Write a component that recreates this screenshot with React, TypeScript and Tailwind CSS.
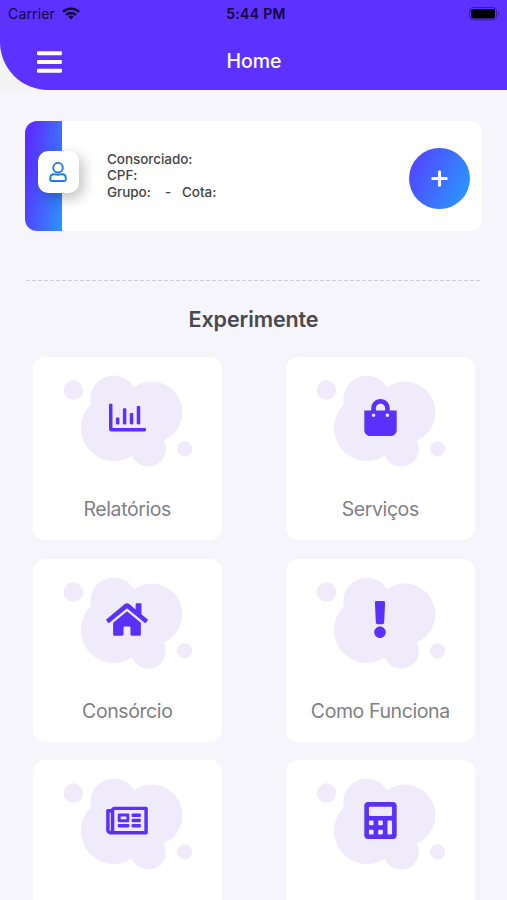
import React from 'react'
import type {IconType} from 'react-icons'
import {
    FaBars,
    FaCalculator,
    FaExclamation,
    FaHome,
    FaRegChartBar,
    FaRegNewspaper,
    FaShoppingBag,
} from 'react-icons/fa'

interface MenuItem {
    label?: string
    icon: IconType
    iconClass: string
}

const menuItems: MenuItem[] = [
    {label: 'Relatórios', icon: FaRegChartBar, iconClass: 'w-[37px] h-[37px]'},
    {label: 'Serviços', icon: FaShoppingBag, iconClass: 'w-[33px] h-[37px]'},
    {label: 'Consórcio', icon: FaHome, iconClass: 'w-[42px] h-[37px]'},
    {label: 'Como Funciona', icon: FaExclamation, iconClass: 'w-[14px] h-[37px]'},
    {icon: FaRegNewspaper, iconClass: 'w-[42px] h-[37px]'},
    {icon: FaCalculator, iconClass: 'w-[33px] h-[37px]'},
]

function StatusBar() {
    return (
        <div className="grid grid-cols-3 items-center h-7 pl-2 pr-[7px] text-[#12063d]">
            <div className="flex items-center gap-[7px]">
                <span className="text-[14px] leading-none tracking-[0.15px]">Carrier</span>
                <svg className="-mt-px" width="18" height="13" viewBox="0 0 18 13" fill="none" stroke="#0c0330" strokeWidth="2.4">
                    <path d="M1 4.9a11.4 11.4 0 0 1 16 0"/>
                    <path d="M4 8a7.1 7.1 0 0 1 10 0"/>
                    <path d="M9 12.4 6.4 9.8a3.8 3.8 0 0 1 5.2 0z" fill="#0c0330" stroke="none"/>
                </svg>
            </div>
            <span className="text-center text-[14px] leading-none font-semibold tracking-[0.3px] pl-[4px]">5:44 PM</span>
            <svg className="justify-self-end -mt-px" width="31" height="14" viewBox="0 0 31 14">
                <rect x="0.5" y="0.5" width="27" height="12.5" rx="3.5" fill="none" stroke="#3b1ba8"/>
                <rect x="2" y="2" width="24" height="9.5" rx="2" fill="#000"/>
                <path d="M29 4.7c1.5.6 1.5 3.5 0 4.1z" fill="#3b1ba8"/>
            </svg>
        </div>
    )
}

function Header() {
    return (
        <header className="bg-[#f3f3f4]">
            <div className="h-[90px] bg-[#5d31ff] rounded-bl-[48px]">
                <StatusBar/>
                <div className="grid grid-cols-[1fr_auto_1fr] items-center h-[66px] pl-[37px]">
                    <button className="w-6 pt-[2px]">
                        <FaBars className="w-[25px] h-[28px] text-white" preserveAspectRatio="none"/>
                    </button>
                    <h1 className="pt-px text-[19.5px] leading-none font-medium text-white -ml-[36px]">Home</h1>
                </div>
            </div>
        </header>
    )
}

function ProfileCard() {
    return (
        <section className="flex items-center h-[110px] rounded-xl bg-white overflow-hidden">
            <div className="flex items-center w-[37px] h-full pl-[12.5px] bg-[linear-gradient(100deg,#5a30ff_15%,#2b95ff_100%)]">
                <div
                    className="flex items-center justify-center shrink-0 w-[41.5px] h-[42px] -mt-[7px] rounded-[10px] bg-white shadow-[4px_5px_14px_rgba(0,0,0,0.26)]">
                    <svg width="18" height="20" viewBox="0 0 18 20" fill="none" stroke="#2079f2" strokeWidth="1.9">
                        <circle cx="9" cy="5.7" r="4.8"/>
                        <path d="M5 12.2c1.2 0 2 .6 4 .6s2.8-.6 4-.6c2.4 0 3.8 1.7 3.8 4v1.3c0 .9-.6 1.5-1.5 1.5H2.7c-.9 0-1.5-.6-1.5-1.5v-1.3c0-2.3 1.4-4 3.8-4z"/>
                    </svg>
                </div>
            </div>
            <div className="flex-1 pl-[45px] text-[13.5px] leading-[16.2px] tracking-[-0.05px] font-medium text-[#454547]">
                <p>Consorciado:</p>
                <p>CPF:</p>
                <p className="flex">
                    <span className="w-[58px]">Grupo:</span>
                    <span className="w-[17px]">-</span>
                    <span>Cota:</span>
                </p>
            </div>
            <button
                className="flex items-center justify-center w-[61px] h-[61px] mr-[12px] mt-[6px] rounded-full bg-[linear-gradient(115deg,#5146ff_10%,#2b95ff_90%)]">
                <svg width="17" height="17" viewBox="0 0 17 17" stroke="#fff" strokeWidth="3" strokeLinecap="round">
                    <path d="M8.5 1.7v13.6M1.7 8.5h13.6"/>
                </svg>
            </button>
        </section>
    )
}

function Cloud() {
    return (
        <svg className="w-full h-full" viewBox="0 0 190 120" fill="#efebfb">
            <circle cx="40.5" cy="33" r="9.8"/>
            <circle cx="81" cy="42" r="23.5"/>
            <circle cx="119" cy="55.3" r="30.8"/>
            <circle cx="81" cy="71" r="33"/>
            <circle cx="115.5" cy="92" r="17.7"/>
            <circle cx="152" cy="92" r="7.6"/>
        </svg>
    )
}

function MenuCard({label, icon: Icon, iconClass}: MenuItem) {
    return (
        <button className="flex flex-col items-center h-[183px] rounded-xl bg-white">
            <div className="grid w-full h-[120px]">
                <div className="col-start-1 row-start-1">
                    <Cloud/>
                </div>
                <div className="col-start-1 row-start-1 flex items-center justify-center pt-px">
                    <Icon className={`${iconClass} text-[#5b30fb]`}/>
                </div>
            </div>
            {label && <span className="mt-[20px] text-[19.5px] leading-6 tracking-[-0.4px] text-[#808084]">{label}</span>}
        </button>
    )
}

export default function App() {
    return (
        <div
            className="w-full h-[900px] overflow-hidden bg-[#f6f5fb] font-['Inter','Liberation_Sans',sans-serif]">
            <Header/>
            <main className="px-[25px] pt-[30.5px]">
                <ProfileCard/>
                <div
                    className="mt-[49px] ml-px h-[1.5px] bg-[repeating-linear-gradient(90deg,#cfcdd5_0_4px,transparent_4px_6px)]"/>
                <h2 className="mt-[24px] text-center text-[21.5px] leading-7 tracking-[-0.1px] font-semibold text-[#48484d]">Experimente</h2>
                <div className="grid grid-cols-[189.5px_189.5px] justify-between gap-y-[18.5px] mt-[24px] pl-[7.5px] pr-[7px]">
                    {menuItems.map((item, index) => (
                        <MenuCard key={index} {...item}/>
                    ))}
                </div>
            </main>
        </div>
    )
}
